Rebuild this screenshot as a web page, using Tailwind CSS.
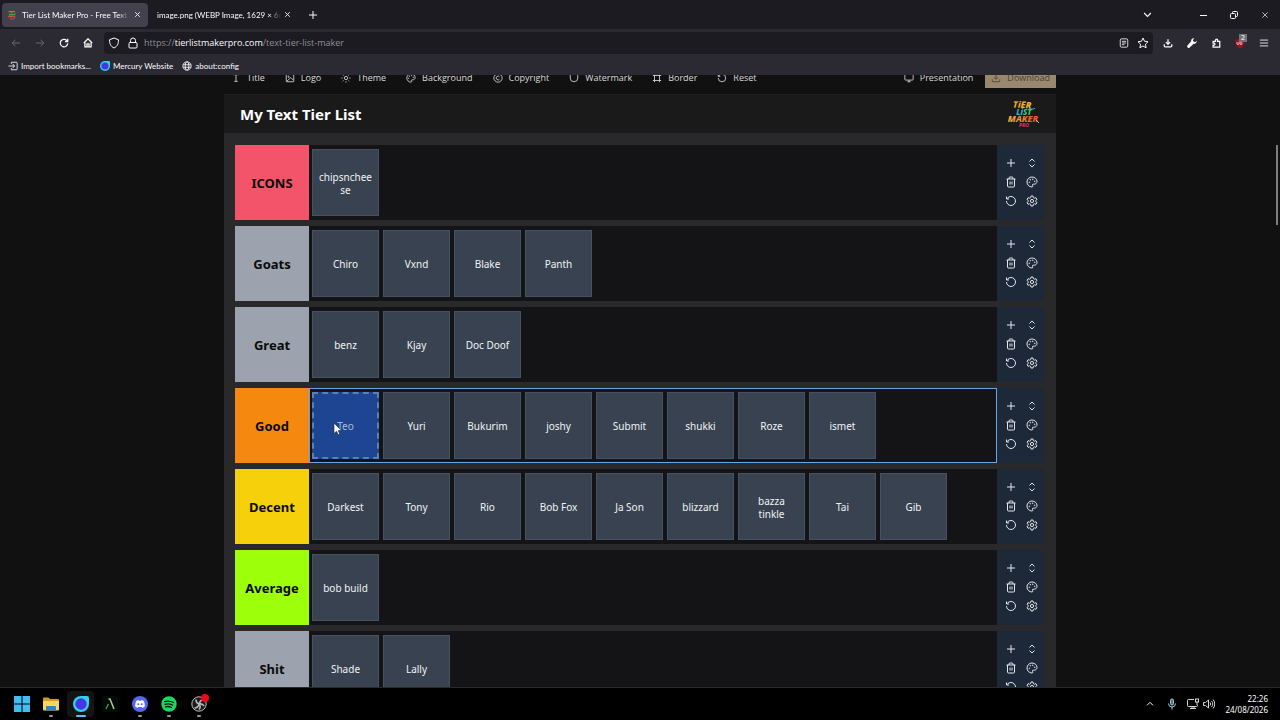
<!DOCTYPE html>
<html lang="en">
<head>
<meta charset="utf-8"/>
<meta content="width=device-width, initial-scale=1.0" name="viewport"/>
<title>Tier List Maker Pro - Free Text Tier List</title>
<script src="https://cdn.jsdelivr.net/npm/@tailwindcss/browser@4"></script>
</head>
<body class="h-screen flex flex-col overflow-hidden bg-[#111112] text-[#fbfbfe] font-['Open_Sans',sans-serif] text-[9px] leading-[12px]">

<!-- Icon sprite -->
<svg class="hidden">
<defs>
<symbol id="i-plus" viewBox="0 0 24 24"><path d="M4 12h16M12 4v16"/></symbol>
<symbol id="i-updown" viewBox="0 0 24 24"><path d="m7 15 5 5 5-5M7 9l5-5 5 5"/></symbol>
<symbol id="i-trash" viewBox="0 0 24 24"><path d="M3 6h18M19 6v14a2 2 0 0 1-2 2H7a2 2 0 0 1-2-2V6M8 6V4a2 2 0 0 1 2-2h4a2 2 0 0 1 2 2v2M10 11v6M14 11v6"/></symbol>
<symbol id="i-palette" viewBox="0 0 24 24"><circle cx="13.5" cy="6.5" r=".7"/><circle cx="17.5" cy="10.5" r=".7"/><circle cx="8.5" cy="7.5" r=".7"/><circle cx="6.5" cy="12.5" r=".7"/><path d="M12 2a10 10 0 1 0 0 20c1 0 1.700-.8 1.700-1.700 0-.5-.2-.8-.5-1.100-.3-.3-.4-.7-.4-1.100a1.600 1.600 0 0 1 1.700-1.700h2c3 0 5.500-2.500 5.500-5.500C22 6 17.500 2 12 2z"/></symbol>
<symbol id="i-undo" viewBox="0 0 24 24"><path d="M3 12a9 9 0 1 0 9-9 9.800 9.800 0 0 0-6.700 2.700L3 8M3 3v5h5"/></symbol>
<symbol id="i-gear" viewBox="0 0 24 24"><path d="M10 2h4l.7 3.200 2 1.200 3.200-1 2 3.500L19.500 11v2l2.400 2.100-2 3.500-3.200-1-2 1.200L14 22h-4l-.7-3.200-2-1.200-3.200 1-2-3.500L4.500 13v-2L2.100 8.900l2-3.500 3.200 1 2-1.200z"/><circle cx="12" cy="12" r="3.200"/></symbol>
<symbol id="i-text" viewBox="0 0 24 24"><path d="M5 4h14M12 4v16M8 20h8"/></symbol>
<symbol id="i-image" viewBox="0 0 24 24"><path d="M12 3H4a1 1 0 0 0-1 1v16a1 1 0 0 0 1 1h16a1 1 0 0 0 1-1V4h-4M4 20l10-9 6 6"/><circle cx="8.500" cy="9" r="1.500"/></symbol>
<symbol id="i-sun" viewBox="0 0 24 24"><circle cx="12" cy="12" r="4"/><path d="M12 1v3M12 20v3M1 12h3M20 12h3M4 4l2 2M18 18l2 2M4 20l2-2M18 6l2-2"/></symbol>
<symbol id="i-copy" viewBox="0 0 24 24"><circle cx="12" cy="12" r="10"/><path d="M15.500 9a4.500 4.500 0 1 0 0 6"/></symbol>
<symbol id="i-drop" viewBox="0 0 24 24"><path d="M3 4v8a9 9 0 0 0 18 0V4"/></symbol>
<symbol id="i-frame" viewBox="0 0 24 24"><path d="M2 6h20M2 18h20M6 2v20M18 2v20"/></symbol>
<symbol id="i-screen" viewBox="0 0 24 24"><path d="M4 3h16a2 2 0 0 1 2 2v10a2 2 0 0 1-2 2H4a2 2 0 0 1-2-2V5a2 2 0 0 1 2-2zM8 21h8M12 17v4"/></symbol>
<symbol id="i-download" viewBox="0 0 24 24"><path d="M12 3v12M7 10l5 5 5-5M3 15v4a2 2 0 0 0 2 2h14a2 2 0 0 0 2-2v-4"/></symbol>
<symbol id="i-x" viewBox="0 0 24 24"><path d="M4 4l16 16M20 4L4 20"/></symbol>
<symbol id="i-down" viewBox="0 0 24 24"><path d="m3 8 9 9 9-9"/></symbol>
<symbol id="i-up" viewBox="0 0 24 24"><path d="m3 16 9-9 9 9"/></symbol>
<symbol id="i-back" viewBox="0 0 24 24"><path d="M22 12H3M11 4l-8 8 8 8"/></symbol>
<symbol id="i-forward" viewBox="0 0 24 24"><path d="M2 12h19M13 4l8 8-8 8"/></symbol>
<symbol id="i-reload" viewBox="0 0 24 24"><path d="M21 13a9 9 0 1 1-3-7.700L21 8M21 2v6.500h-6.500"/></symbol>
<symbol id="i-home" viewBox="0 0 24 24"><path d="M2 12 12 2l10 10M4.500 10v11.500h15V10M9.500 21v-7h5v7"/></symbol>
<symbol id="i-shield" viewBox="0 0 24 24"><path d="M12 2 3 5.500c0 8 2 13 9 16.500 7-3.500 9-8.500 9-16.500z"/></symbol>
<symbol id="i-lock" viewBox="0 0 24 24"><path d="M6 11h12a2 2 0 0 1 2 2v7a2 2 0 0 1-2 2H6a2 2 0 0 1-2-2v-7a2 2 0 0 1 2-2zM7 11V7a5 5 0 0 1 10 0v4"/></symbol>
<symbol id="i-reader" viewBox="0 0 24 24"><rect x="3" y="2" width="18" height="20" rx="3"/><path d="M7 8h10M7 12h10M7 16h6"/></symbol>
<symbol id="i-star" viewBox="0 0 24 24"><path d="m12 2 3 6.500 7 .9-5.100 5 1.300 7.100L12 18l-6.200 3.500 1.300-7.100L2 9.400l7-.9z"/></symbol>
<symbol id="i-puzzle" viewBox="0 0 24 24"><path d="M5 22h16V8h-5V5a2.500 2.500 0 0 0-5 0v3H5v4h2a2.500 2.500 0 0 1 0 5H5z"/></symbol>
<symbol id="i-menu" viewBox="0 0 24 24"><path d="M2 5h20M2 12h20M2 19h20"/></symbol>
<symbol id="i-import" viewBox="0 0 24 24"><path d="M8 3h12a2 2 0 0 1 2 2v14a2 2 0 0 1-2 2H8M8 3v4M8 17v4M1 12h14M11 7l5 5-5 5"/></symbol>
<symbol id="i-globe" viewBox="0 0 24 24"><circle cx="12" cy="12" r="10"/><ellipse cx="12" cy="12" rx="4.500" ry="10"/><path d="M2.500 9h19M2.500 15h19"/></symbol>
<symbol id="i-mercury" viewBox="0 0 24 24"><circle cx="12" cy="12" r="12" fill="#2fd3f0"/><path d="M12 0h9a3 3 0 0 1 3 3v9z" fill="#2fd3f0"/><circle cx="12" cy="12" r="8.500" fill="#4636e3"/></symbol>
</defs>
</svg>

<!-- Tabs -->
<header class="h-[29px] shrink-0 bg-[#1c1b22] flex items-center pl-[2px] font-['Lato',sans-serif] text-[8px]">
<div class="w-[146px] h-6 rounded-sm bg-[#42414d] flex items-center gap-[5px] pl-[5px] pr-[7px]">
<svg class="size-[10px] shrink-0" viewBox="0 0 20 20" fill="none" stroke-width="2.500"><path d="M3 3h13M9 3v4" stroke="#d9622c"/><path d="M4 9h11l2-2" stroke="#35a853"/><path d="M2 14l3-2 3 2 3-2 6 3" stroke="#d9532c"/><path d="M6 18h9" stroke="#c7395c"/></svg>
<span class="flex-1 min-w-0 overflow-hidden whitespace-nowrap mask-r-from-90%">Tier List Maker Pro - Free Text Tier List</span>
<button aria-label="Close tab"><svg class="size-[7px] fill-none stroke-current stroke-3"><use href="#i-x"/></svg></button>
</div>
<div class="w-[146px] h-6 flex items-center gap-[3px] pl-[9px] pr-[3px]">
<span class="flex-1 min-w-0 overflow-hidden whitespace-nowrap mask-r-from-90%">image.png (WEBP Image, 1629 × 662 pixels)</span>
<button aria-label="Close tab"><svg class="size-[7px] fill-none stroke-current stroke-3"><use href="#i-x"/></svg></button>
</div>
<button aria-label="New tab" class="ml-[13px]"><svg class="size-3 fill-none stroke-current stroke-2"><use href="#i-plus"/></svg></button>
<div class="ml-auto flex items-center pr-[11px]">
<button aria-label="List all tabs" class="mr-[47px]"><svg class="size-[9px] fill-none stroke-current stroke-3"><use href="#i-down"/></svg></button>
<button aria-label="Minimize" class="mr-[23px]"><svg class="size-2" viewBox="0 0 8 8"><path d="M1 4.500h7" stroke="currentColor"/></svg></button>
<button aria-label="Restore" class="mr-[23px]"><svg class="size-2" viewBox="0 0 8 8" fill="none" stroke="currentColor"><rect x=".5" y="2.500" width="5" height="5" rx="1"/><path d="M2.500 2.500V1.500a1 1 0 0 1 1-1h3a1 1 0 0 1 1 1v3a1 1 0 0 1-1 1h-1"/></svg></button>
<button aria-label="Close window"><svg class="size-2 fill-none stroke-current stroke-2"><use href="#i-x"/></svg></button>
</div>
</header>

<!-- Address bar -->
<nav class="h-[28px] shrink-0 bg-[#2b2a33] flex items-center pl-[10px] pr-[10px]">
<div class="flex items-center gap-3 text-[#fbfbfe]">
<button aria-label="Back" class="text-[#73727a]"><svg class="size-3 p-px fill-none stroke-current stroke-2"><use href="#i-back"/></svg></button>
<button aria-label="Forward" class="text-[#73727a]"><svg class="size-3 p-px fill-none stroke-current stroke-2"><use href="#i-forward"/></svg></button>
<button aria-label="Reload"><svg class="size-3 p-px fill-none stroke-current stroke-3"><use href="#i-reload"/></svg></button>
<button aria-label="Home"><svg class="size-3 p-px fill-none stroke-current stroke-3"><use href="#i-home"/></svg></button>
</div>
<div class="ml-[10px] flex-1 h-[22px] rounded-sm bg-[#1c1b22] flex items-center px-1">
<svg class="size-3 fill-none stroke-current stroke-2"><use href="#i-shield"/></svg>
<svg class="ml-[7px] size-3 fill-none stroke-current stroke-2"><use href="#i-lock"/></svg>
<a href="#" class="ml-[5px] flex-1 text-[#8f8e96]">https://<span class="text-[#fbfbfe]">tierlistmakerpro.com</span>/text-tier-list-maker</a>
<button aria-label="Reader view" class="mr-[7px]"><svg class="size-3 p-px fill-none stroke-current stroke-2"><use href="#i-reader"/></svg></button>
<button aria-label="Bookmark this page"><svg class="size-3 fill-none stroke-current stroke-2"><use href="#i-star"/></svg></button>
</div>
<div class="ml-[9px] flex items-center gap-3">
<button aria-label="Downloads"><svg class="size-3 p-px fill-none stroke-current stroke-3"><use href="#i-download"/></svg></button>
<button aria-label="Developer tools"><svg class="size-3 p-px" viewBox="0 0 24 24" fill="currentColor"><path d="M23 6.500 19.500 10l-4-1.500L14 4.500 17.500 1c-4.500-1-8.500 2.500-7.500 7L1.500 17.500a3.400 3.400 0 0 0 5 5L16 14c4.500 1 8-3 7-7.500z"/></svg></button>
<button aria-label="Extensions"><svg class="size-3 p-px fill-none stroke-current stroke-3"><use href="#i-puzzle"/></svg></button>
<button aria-label="Ad blocker" class="relative"><svg class="size-3" viewBox="0 0 24 24"><path d="M12 3 3 6c0 9 2 13 9 17 7-4 9-8 9-17z" fill="#a5101c"/><path d="M6 10v3a2 2 0 0 0 4 0v-3M12 13a2 2 0 1 0 4 0 2 2 0 1 0-4 0" stroke="#eee" stroke-width="1.500" fill="none"/></svg><span class="absolute -top-[3px] left-[5px] w-2 h-[8px] bg-[#737279] text-[7px] leading-[8px] text-white text-center">2</span></button>
<button aria-label="Menu"><svg class="size-3 p-px fill-none stroke-current stroke-2"><use href="#i-menu"/></svg></button>
</div>
</nav>

<!-- Bookmarks -->
<div class="h-[18px] shrink-0 bg-[#2b2a33] flex items-center gap-[9px] pl-2 pb-px font-['Lato',sans-serif] text-[8px]">
<a href="#" class="flex items-center gap-[3px]"><svg class="size-[10px] fill-none stroke-current stroke-2"><use href="#i-import"/></svg>Import bookmarks...</a>
<a href="#" class="flex items-center gap-[3px]"><svg class="size-[10px]"><use href="#i-mercury"/></svg>Mercury Website</a>
<a href="#" class="flex items-center gap-[3px]"><svg class="size-[10px] fill-none stroke-current stroke-2"><use href="#i-globe"/></svg>about:config</a>
</div>

<!-- Page -->
<main class="relative flex-1 min-h-0 overflow-hidden border-b border-[#2a2a2a]">
<div class="w-[65%] mx-auto bg-[#29292b]">
<div class="-mt-[14px] h-[34px] flex items-center gap-5 pl-[7px] bg-[#111112] border-b border-[#1f1f20] text-[#dcdcdc] whitespace-nowrap">
<button class="flex items-center gap-[6px]"><svg class="size-[10px] fill-none stroke-current stroke-2"><use href="#i-text"/></svg>Title</button>
<button class="flex items-center gap-[6px]"><svg class="size-[10px] fill-none stroke-current stroke-2"><use href="#i-image"/></svg>Logo</button>
<button class="flex items-center gap-[6px]"><svg class="size-[10px] fill-none stroke-current stroke-2"><use href="#i-sun"/></svg>Theme</button>
<button class="flex items-center gap-[6px]"><svg class="size-[10px] fill-none stroke-current stroke-2"><use href="#i-palette"/></svg>Background</button>
<button class="flex items-center gap-[6px]"><svg class="size-[10px] fill-none stroke-current stroke-2"><use href="#i-copy"/></svg>Copyright</button>
<button class="flex items-center gap-[6px]"><svg class="size-[10px] fill-none stroke-current stroke-2"><use href="#i-drop"/></svg>Watermark</button>
<button class="flex items-center gap-[6px]"><svg class="size-[10px] fill-none stroke-current stroke-2"><use href="#i-frame"/></svg>Border</button>
<button class="flex items-center gap-[6px]"><svg class="size-[10px] fill-none stroke-current stroke-2"><use href="#i-undo"/></svg>Reset</button>
<div class="ml-auto flex items-center gap-3">
<button class="flex items-center gap-[6px]"><svg class="size-[10px] fill-none stroke-current stroke-2"><use href="#i-screen"/></svg>Presentation</button>
<button class="flex items-center gap-[6px] h-5 px-[6px] bg-[#9a8770] text-[#4b4136]"><svg class="size-[10px] fill-none stroke-current stroke-2"><use href="#i-download"/></svg>Download</button>
</div>
</div>
<div class="h-[38px] flex items-center justify-between pl-4 pr-4 bg-[#1a1a1b]">
<h1 class="font-['Noto_Sans',sans-serif] text-[15px] leading-5 font-bold text-white">My Text Tier List</h1>
<svg class="w-8 h-[28px]" viewBox="0 0 32 28" font-family="Noto Sans, sans-serif" font-weight="800" font-style="italic" text-anchor="middle" role="img" aria-label="Tier List Maker Pro">
<defs>
<linearGradient id="g1"><stop offset="0" stop-color="#f3a12f"/><stop offset="1" stop-color="#f1c232"/></linearGradient>
<linearGradient id="g2"><stop offset="0" stop-color="#25b5d8"/><stop offset="1" stop-color="#4fd365"/></linearGradient>
<linearGradient id="g3"><stop offset="0" stop-color="#f5b52e"/><stop offset="1" stop-color="#ee4b3a"/></linearGradient>
</defs>
<text x="14" y="8" font-size="9" fill="url(#g1)" transform="rotate(3 15 8)">TiER</text>
<text x="16" y="15" font-size="8" fill="url(#g2)">LiST</text>
<path d="M21 9h5l1-1" fill="none" stroke="#25b5d8"/>
<text x="15" y="22" font-size="9" fill="url(#g3)">MAKER</text>
<path d="M28 20l3 3" stroke="#f5b52e"/>
<text x="16" y="27" font-size="5" fill="#d92b6b">PRO</text>
</svg>
</div>
<div class="flex flex-col gap-[6px] pt-3 pl-[11px] pr-3" id="tiers"></div>
</div>
<div class="absolute right-[2px] top-[70px] w-[2px] h-20 bg-[#7d7d80]"></div>
<svg class="absolute left-[333px] top-[347px] w-[9px] h-[14px]" viewBox="0 0 9 14"><path d="M1 1v10.500l2.500-2.300 1.700 3.600 1.600-.7-1.600-3.500H8.500z" fill="#fff" stroke="#222" stroke-width=".6"/></svg>
</main>

<!-- Taskbar -->
<footer class="h-8 shrink-0 bg-black flex items-center pl-[9px] pr-3">
<div class="flex items-center gap-[3px]">
<button aria-label="Start" class="w-[26px] h-[26px] flex justify-center items-center"><svg class="size-4" viewBox="0 0 16 16" fill="#42bdf2"><path d="M0 0h7.500v7.500H0zM8.500 0H16v7.500H8.500zM0 8.500h7.500V16H0zM8.500 8.500H16V16H8.500z"/></svg></button>
<button aria-label="File Explorer" class="relative w-[26px] h-[26px] flex justify-center items-center"><svg class="size-4" viewBox="0 0 16 16"><path d="M0 2.500a1 1 0 0 1 1-1h4.500l1.500 1.500h8a1 1 0 0 1 1 1v4H0z" fill="#d9981e"/><path d="M0 5h16v8.500a1 1 0 0 1-1 1H1a1 1 0 0 1-1-1z" fill="#fcd462"/><path d="M3 14.500V11a1 1 0 0 1 1-1h8a1 1 0 0 1 1 1v3.500z" fill="#2a86c9"/></svg><span class="absolute bottom-0 w-1 h-[2px] rounded-full bg-[#9a9a9a]"></span></button>
<button aria-label="Mercury" class="relative w-[27px] h-[26px] rounded-sm bg-[#141414] flex justify-center items-center"><svg class="size-4"><use href="#i-mercury"/></svg><span class="absolute bottom-0 w-[10px] h-[2px] rounded-full bg-[#5cc4f5]"></span></button>
<button aria-label="Launcher" class="w-[26px] h-[26px] flex justify-center items-center"><svg class="size-4" viewBox="0 0 16 16" fill="none"><rect width="16" height="16" rx="2" fill="#070b08"/><path d="M4 13 6.500 8" stroke="#4f8a4c" stroke-width="1.500"/><path d="M6.500 3h1.500l4 10" stroke="#a4cf8c" stroke-width="1.500"/></svg></button>
<button aria-label="Discord" class="relative w-[27px] h-[26px] flex justify-center items-center"><svg class="size-4" viewBox="0 0 16 16"><circle cx="8" cy="8" r="8" fill="#5865f2"/><path d="M4.500 4.800 6.500 4l.5.800h2L9.500 4l2 .8c1 1.700 1.500 3.600 1.300 5.700L10.500 12l-.7-1H6.200l-.7 1-2.300-1.500c-.2-2.100.3-4 1.300-5.700z" fill="#fff"/><circle cx="6.300" cy="8.300" r="1" fill="#5865f2"/><circle cx="9.700" cy="8.300" r="1" fill="#5865f2"/></svg><span class="absolute bottom-0 w-1 h-[2px] rounded-full bg-[#9a9a9a]"></span></button>
<button aria-label="Spotify" class="relative w-[26px] h-[26px] flex justify-center items-center"><svg class="size-4" viewBox="0 0 16 16"><circle cx="8" cy="8" r="7.700" fill="#1ed760"/><path d="M3.500 5.600c3-.9 6.200-.6 9 .9M4 8.300c2.600-.7 5.200-.4 7.500.8M4.500 10.800c2-.5 4.200-.3 6 .7" fill="none" stroke="#0b1a10" stroke-width="1.300" stroke-linecap="round"/></svg><span class="absolute bottom-0 w-1 h-[2px] rounded-full bg-[#9a9a9a]"></span></button>
<button aria-label="OBS" class="relative w-[27px] h-[26px] flex justify-center items-center"><svg class="size-4" viewBox="0 0 16 16"><circle cx="8" cy="8" r="7.200" fill="#1b1b1d" stroke="#bdbdbd" stroke-width="1"/><path d="M5 3.500C5 6 6 7.500 8 8c2.500-.5 4 0 5 2M8 8c-.5 2.500-2 4-4.500 4M8 8c1.500 2 1.500 4 0 5.500M8 8C9 6 9 4.500 11 4" fill="none" stroke="#b5b5b5" stroke-width="1.600"/></svg><span class="absolute top-[3px] right-[3px] size-2 rounded-full bg-[#f00818]"></span><span class="absolute bottom-0 w-1 h-[2px] rounded-full bg-[#9a9a9a]"></span></button>
</div>
<div class="ml-auto flex items-center">
<button aria-label="Show hidden icons"><svg class="size-2 fill-none stroke-current stroke-3"><use href="#i-up"/></svg></button>
<svg class="ml-3 w-3 h-3" viewBox="0 0 12 12" fill="none" stroke="#a5cbd8"><rect x="4.500" y="1" width="3" height="6" rx="1.500" fill="#467687"/><path d="M2.500 5.500a3.500 3.500 0 0 0 7 0M6 9v2.500"/></svg>
<svg class="ml-[9px] w-3 h-3" viewBox="0 0 12 12" fill="none" stroke="#d8d8d8"><path d="M7 1.500H1.500a1 1 0 0 0-1 1v5a1 1 0 0 0 1 1h8a1 1 0 0 0 1-1V7M3 10.500h6M5 8.500v2M7 8.500v2"/><rect x="8.500" y="1" width="3" height="3"/><path d="M10 4v3"/></svg>
<svg class="ml-1 w-3 h-3" viewBox="0 0 12 12" fill="none" stroke="#d8d8d8"><path d="M.5 4.500h2L5.500 2v8l-3-2.500h-2zM7 4.500a2.200 2.200 0 0 1 0 3M8.500 3a4.200 4.200 0 0 1 0 6M10 1.500a6.500 6.500 0 0 1 0 9"/></svg>
<div class="ml-[10px] text-right font-['Noto_Sans',sans-serif] text-[8px] leading-[11px]"><p>22:26</p><p>24/08/2026</p></div>
</div>
</footer>

<script>
const tiers = [
  { name: "ICONS", color: "#f4546a", items: ["chipsncheese"] },
  { name: "Goats", color: "#9ca3af", items: ["Chiro", "Vxnd", "Blake", "Panth"] },
  { name: "Great", color: "#9ca3af", items: ["benz", "Kjay", "Doc Doof"] },
  { name: "Good", color: "#f5890f", items: ["Teo", "Yuri", "Bukurim", "joshy", "Submit", "shukki", "Roze", "ismet"], active: true },
  { name: "Decent", color: "#f5d00b", items: ["Darkest", "Tony", "Rio", "Bob Fox", "Ja Son", "blizzard", "bazza tinkle", "Tai", "Gib"] },
  { name: "Average", color: "#9dff0a", items: ["bob build"] },
  { name: "Shit", color: "#9ca3af", items: ["Shade", "Lally"] }
];

const controls = [
  ["plus", "Add item"], ["updown", "Move tier"],
  ["trash", "Delete tier"], ["palette", "Tier color"],
  ["undo", "Reset tier"], ["gear", "Tier settings"]
];

const cardClass = "w-[67px] h-[67px] px-[5px] pt-[2px] flex items-center justify-center text-center wrap-anywhere border border-[#465261] bg-[#384250] text-[#f1f3f5]";
const draggedClass = "w-[67px] h-[67px] pt-[2px] flex items-center justify-center text-center border-2 border-dashed border-[#5a80b8] bg-[#1e4592] text-[#a9bbdb]";

document.getElementById("tiers").innerHTML = tiers.map(tier => `
  <section class="flex h-[75px] font-['Noto_Sans',sans-serif]">
    <h2 class="w-[74px] shrink-0 flex items-center justify-center text-[13px] font-bold text-[#0a0a0a]" style="background-color:${tier.color}">${tier.name}</h2>
    <div class="flex-1 flex gap-1 py-[3px] pl-[2px] border bg-[#141416] text-[10px] leading-[13px] ${tier.active ? "border-[#66a6ef]" : "border-[#141416]"}">
      ${tier.items.map((item, i) => `<div draggable="true" class="${tier.active && i === 0 ? draggedClass : cardClass}">${item}</div>`).join("")}
    </div>
    <div class="w-[47px] pb-[2px] pl-[2px] shrink-0 grid grid-cols-[12px_12px] auto-rows-[12px] gap-x-[9px] gap-y-[7px] content-center justify-center bg-[#1d2939] text-[#e5e7eb]">
      ${controls.map(c => `<button aria-label="${c[1]}"><svg class="size-3 fill-none stroke-current stroke-2"><use href="#i-${c[0]}"/></svg></button>`).join("")}
    </div>
  </section>`).join("");
</script>
</body>
</html>
